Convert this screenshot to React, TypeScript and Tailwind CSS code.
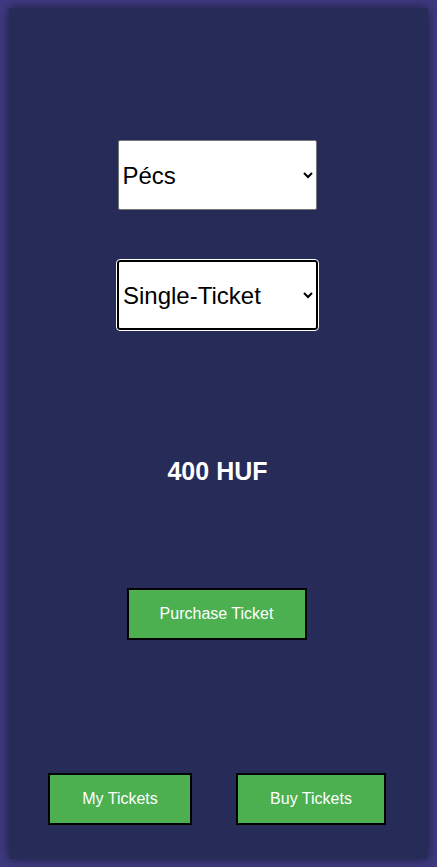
import React from "react";

export default function App() {
  return (
    <div className="min-h-[867px] w-full bg-[#3e3a80] pt-[8px] pb-[8px] px-[9px]" style={{ fontFamily: '"Liberation Sans", Arial, sans-serif' }}>
      <div className="h-[851px] w-[419px] bg-[#272b57] shadow-[0_0_10px_rgba(0,0,0,0.55)] flex flex-col items-center">
        <select defaultValue="pecs" className="mt-[132px] h-[70px] w-[199px] bg-white text-black text-[24px] border border-[#767676] rounded-[2px] pl-0 pr-[6px] mr-[3px]">
          <option value="pecs">Pécs</option>
          <option value="budapest">Budapest</option>
        </select>
        <select defaultValue="single" className="mt-[50px] h-[70px] w-[201px] bg-white text-black text-[24px] border-2 border-black rounded-[3px] outline outline-1 outline-white pl-0 pr-[6px] mr-[2px]">
          <option value="single">Single-Ticket</option>
          <option value="day">Day-Ticket</option>
        </select>
        <div className="mt-[127px] text-white font-bold text-[25px] leading-[29px] mr-[2px]">400 HUF</div>
        <button className="mt-[102px] h-[52px] w-[180px] bg-[#4caf50] border-2 border-black text-white text-[16px] mr-[4px]">
          Purchase Ticket
        </button>
        <div className="mt-[133px] flex w-full pl-[39px] gap-[44px]">
          <button className="h-[52px] w-[144px] bg-[#4caf50] border-2 border-black text-white text-[16px]">My Tickets</button>
          <button className="h-[52px] w-[150px] bg-[#4caf50] border-2 border-black text-white text-[16px]">Buy Tickets</button>
        </div>
      </div>
    </div>
  );
}
